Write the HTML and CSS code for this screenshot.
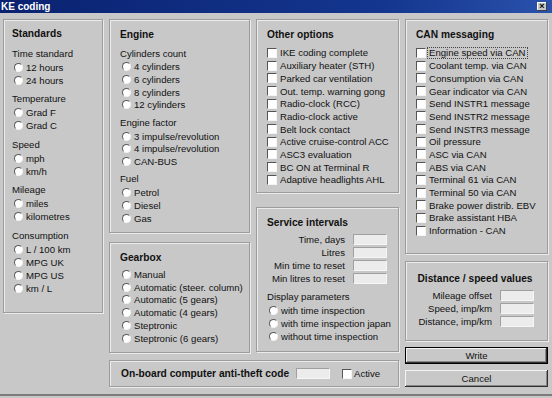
FILE: index.html
```html
<!DOCTYPE html>
<html lang="en">
<head>
  <meta charset="UTF-8">
  <title>KE coding</title>
  <link rel="stylesheet" href="styles.css">
</head>
<body>

  <div class="titlebar">
    <span class="title">KE coding</span>
    <span class="close">&times;</span>
  </div>

  <div class="dialog">

    <section class="group std">
      <h2>Standards</h2>
      <div class="glabel">Time standard</div>
      <div class="opt"><span class="radio"></span>12 hours</div>
      <div class="opt"><span class="radio"></span>24 hours</div>
      <div class="glabel">Temperature</div>
      <div class="opt"><span class="radio"></span>Grad F</div>
      <div class="opt"><span class="radio"></span>Grad C</div>
      <div class="glabel">Speed</div>
      <div class="opt"><span class="radio"></span>mph</div>
      <div class="opt"><span class="radio"></span>km/h</div>
      <div class="glabel">Mileage</div>
      <div class="opt"><span class="radio"></span>miles</div>
      <div class="opt"><span class="radio"></span>kilometres</div>
      <div class="glabel">Consumption</div>
      <div class="opt"><span class="radio"></span>L / 100 km</div>
      <div class="opt"><span class="radio"></span>MPG UK</div>
      <div class="opt"><span class="radio"></span>MPG US</div>
      <div class="opt"><span class="radio"></span>km / L</div>
    </section>

    <div class="col col2">
      <section class="group engine">
        <h2>Engine</h2>
        <div class="glabel">Cylinders count</div>
        <div class="opt"><span class="radio"></span>4 cylinders</div>
        <div class="opt"><span class="radio"></span>6 cylinders</div>
        <div class="opt"><span class="radio"></span>8 cylinders</div>
        <div class="opt"><span class="radio"></span>12 cylinders</div>
        <div class="glabel">Engine factor</div>
        <div class="opt"><span class="radio"></span>3 impulse/revolution</div>
        <div class="opt"><span class="radio"></span>4 impulse/revolution</div>
        <div class="opt"><span class="radio"></span>CAN-BUS</div>
        <div class="glabel">Fuel</div>
        <div class="opt"><span class="radio"></span>Petrol</div>
        <div class="opt"><span class="radio"></span>Diesel</div>
        <div class="opt"><span class="radio"></span>Gas</div>
      </section>

      <section class="group gearbox">
        <h2>Gearbox</h2>
        <div class="list">
          <div class="opt"><span class="radio"></span>Manual</div>
          <div class="opt"><span class="radio"></span>Automatic (steer. column)</div>
          <div class="opt"><span class="radio"></span>Automatic (5 gears)</div>
          <div class="opt"><span class="radio"></span>Automatic (4 gears)</div>
          <div class="opt"><span class="radio"></span>Steptronic</div>
          <div class="opt"><span class="radio"></span>Steptronic (6 gears)</div>
        </div>
      </section>
    </div>

    <div class="col col3">
      <section class="group other">
        <h2>Other options</h2>
        <div class="list">
          <div class="opt"><span class="check"></span>IKE coding complete</div>
          <div class="opt"><span class="check"></span>Auxiliary heater (STH)</div>
          <div class="opt"><span class="check"></span>Parked car ventilation</div>
          <div class="opt"><span class="check"></span>Out. temp. warning gong</div>
          <div class="opt"><span class="check"></span>Radio-clock (RCC)</div>
          <div class="opt"><span class="check"></span>Radio-clock active</div>
          <div class="opt"><span class="check"></span>Belt lock contact</div>
          <div class="opt"><span class="check"></span>Active cruise-control ACC</div>
          <div class="opt"><span class="check"></span>ASC3 evaluation</div>
          <div class="opt"><span class="check"></span>BC ON at Terminal R</div>
          <div class="opt"><span class="check"></span>Adaptive headlights AHL</div>
        </div>
      </section>

      <section class="group service">
        <h2>Service intervals</h2>
        <div class="fields">
          <span>Time, days</span><span class="field"></span>
          <span>Litres</span><span class="field"></span>
          <span>Min time to reset</span><span class="field"></span>
          <span>Min litres to reset</span><span class="field"></span>
        </div>
        <div class="glabel">Display parameters</div>
        <div class="list">
          <div class="opt"><span class="radio"></span>with time inspection</div>
          <div class="opt"><span class="radio"></span>with time inspection japan</div>
          <div class="opt"><span class="radio"></span>without time inspection</div>
        </div>
      </section>
    </div>

    <div class="col col4">
      <section class="group can">
        <h2>CAN messaging</h2>
        <div class="list">
          <div class="opt"><span class="check"></span><span class="focus">Engine speed via CAN</span></div>
          <div class="opt"><span class="check"></span>Coolant temp. via CAN</div>
          <div class="opt"><span class="check"></span>Consumption via CAN</div>
          <div class="opt"><span class="check"></span>Gear indicator via CAN</div>
          <div class="opt"><span class="check"></span>Send INSTR1 message</div>
          <div class="opt"><span class="check"></span>Send INSTR2 message</div>
          <div class="opt"><span class="check"></span>Send INSTR3 message</div>
          <div class="opt"><span class="check"></span>Oil pressure</div>
          <div class="opt"><span class="check"></span>ASC via CAN</div>
          <div class="opt"><span class="check"></span>ABS via CAN</div>
          <div class="opt"><span class="check"></span>Terminal 61 via CAN</div>
          <div class="opt"><span class="check"></span>Terminal 50 via CAN</div>
          <div class="opt"><span class="check"></span>Brake power distrib. EBV</div>
          <div class="opt"><span class="check"></span>Brake assistant HBA</div>
          <div class="opt"><span class="check"></span>Information - CAN</div>
        </div>
      </section>

      <section class="group distance">
        <h2>Distance / speed values</h2>
        <div class="fields">
          <span>Mileage offset</span><span class="field"></span>
          <span>Speed, imp/km</span><span class="field"></span>
          <span>Distance, imp/km</span><span class="field"></span>
        </div>
      </section>

      <button class="btn default">Write</button>
      <button class="btn">Cancel</button>
    </div>

    <section class="group antitheft">
      <h2>On-board computer anti-theft code</h2>
      <span class="field"></span>
      <span class="check"></span>
      <span class="active">Active</span>
    </section>

  </div>

</body>
</html>
```

FILE: styles.css
```css
* {
  box-sizing: border-box;
}
body {
  margin: 0;
  width: 552px;
  height: 398px;
  overflow: hidden;
  background-color: #c8c8c8;
  font-family: "Liberation Sans", Arial, sans-serif;
  font-size: 9.6px;
  color: #111;
}
.titlebar {
  height: 13px;
  background: linear-gradient(90deg, #0a2270, #14368f 70%, #2a52ac);
  color: #fff;
  display: flex;
  align-items: center;
  justify-content: space-between;
  padding: 0 5px 0 1px;
}
.title {
  font-weight: bold;
  font-size: 10px;
}
.close {
  width: 10px;
  height: 9px;
  background: #c8c8c8;
  color: #000;
  font-size: 9px;
  line-height: 9px;
  text-align: center;
  font-weight: bold;
  box-shadow: inset -1px -1px #404040, inset 1px 1px #fff;
}
.dialog {
  display: grid;
  grid-template-columns: 100px 141px 143px 143px;
  grid-template-rows: 334px 27px;
  column-gap: 6px;
  row-gap: 7px;
  padding: 6px 0 0 3px;
  height: 383px;
  border-bottom: 2px solid #7c7c7c;
}
.col {
  display: flex;
  flex-direction: column;
}
.col2 {
  grid-column: 2;
  grid-row: 1;
  gap: 9px;
}
.col3 {
  grid-column: 3;
  grid-row: 1;
  gap: 14px;
}
.col4 {
  grid-column: 4;
  grid-row: 1 / 3;
}
.group {
  border: 1px solid #9c9c9c;
  box-shadow: inset 1px 1px 0 #ececec, 1px 1px 0 #ececec;
  padding: 8px 8px 0 10px;
}
.group h2 {
  margin: 0;
  font-size: 10.2px;
  font-weight: bold;
  line-height: 14px;
  white-space: nowrap;
}
.glabel {
  margin-top: 4.5px;
  line-height: 14px;
}
.opt {
  display: flex;
  align-items: center;
  height: 12.7px;
  white-space: nowrap;
}
.radio {
  flex: none;
  width: 9px;
  height: 9px;
  margin: 0 3px 0 2px;
  border-radius: 50%;
  background: #fff;
  border: 1.5px solid;
  border-color: #5a5a5a #f2f2f2 #f2f2f2 #5a5a5a;
}
.check {
  flex: none;
  width: 10px;
  height: 10px;
  margin-right: 3px;
  background: #fff;
  border: 1px solid;
  border-color: #555 #f4f4f4 #f4f4f4 #555;
}
.focus {
  border: 1px dotted #444;
  padding: 0 1px;
  margin-left: -2px;
  line-height: 10px;
}
.field {
  display: block;
  width: 34px;
  height: 11px;
  background: #ececec;
  border: 1px solid;
  border-color: #a0a0a0 #f6f6f6 #f6f6f6 #a0a0a0;
}

/* standards */
.std {
  grid-column: 1;
  grid-row: 1;
  height: 294px;
  padding: 7px 4px 0 8px;
}
.std .glabel {
  margin-top: 5.5px;
}
.std .opt {
  height: 13px;
}

.engine {
  height: 214px;
}
.gearbox {
  height: 111px;
}
.gearbox .list {
  margin-top: 3px;
}
.gearbox .opt {
  height: 12.8px;
}

.other {
  height: 174px;
}
.other .list,
.can .list {
  margin-top: 4.6px;
}
.service {
  height: 145px;
  padding-right: 11px;
}
.fields {
  display: grid;
  grid-template-columns: 1fr 34px;
  column-gap: 8px;
  row-gap: 2px;
  margin-top: 3.5px;
  line-height: 11px;
}
.fields span:nth-child(odd) {
  text-align: right;
  white-space: nowrap;
}
.service .glabel {
  margin-top: 6px;
}
.service .list {
  margin-top: 1px;
}

.can {
  height: 236px;
}
.distance {
  height: 80px;
  margin-top: 7px;
  padding: 10px 13px 0 10px;
}
.distance h2 {
  text-align: center;
}
.distance .fields {
  margin-top: 4px;
}

.btn {
  height: 17px;
  width: 100%;
  margin-top: 6px;
  padding: 0;
  font-family: inherit;
  font-size: 9.6px;
  color: #111;
  background: #c8c8c8;
  border: none;
  box-shadow: inset -1px -1px #303030, inset 1px 1px #f4f4f4, inset -2px -2px #888;
}
.btn.default {
  border: 1px solid #000;
}

.antitheft {
  grid-column: 2 / 4;
  grid-row: 2;
  display: flex;
  align-items: center;
  padding: 0 0 0 11px;
}
.antitheft h2 {
  flex: 0 0 175px;
}
.antitheft .check {
  margin-left: 12px;
  margin-right: 2px;
}
```
